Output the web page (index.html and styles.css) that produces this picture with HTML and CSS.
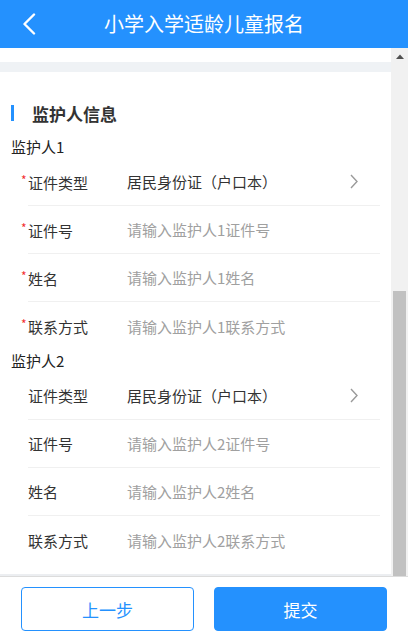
FILE: index.html
```html
<!DOCTYPE html>
<html lang="zh">
<head>
<meta charset="utf-8">
<link rel="stylesheet" href="styles.css">
</head>
<body>
<div class="page">
  <header class="header">
    <svg class="back" width="14" height="22" viewBox="0 0 14 22"><path d="M12 1.5 L2.5 11 L12 20.5" fill="none" stroke="#fff" stroke-width="2.4" stroke-linecap="round" stroke-linejoin="round"/></svg>
    <div class="title">小学入学适龄儿童报名</div>
  </header>
  <main class="main">
    <div class="content">
      <div class="top-white"></div>
      <div class="gap"></div>
      <section class="card">
        <div class="sec-title"><span class="bar"></span><span>监护人信息</span></div>

        <div class="group-label">监护人1</div>
        <div class="row"><div class="label"><span class="req">*</span>证件类型</div><div class="value">居民身份证（户口本）</div><svg class="arrow" width="8" height="15" viewBox="0 0 8 15"><path d="M1 1 L7 7.5 L1 14" fill="none" stroke="#9a9a9a" stroke-width="1.4"/></svg></div>
        <div class="row"><div class="label"><span class="req">*</span>证件号</div><div class="ph">请输入监护人1证件号</div></div>
        <div class="row"><div class="label"><span class="req">*</span>姓名</div><div class="ph">请输入监护人1姓名</div></div>
        <div class="row last"><div class="label"><span class="req">*</span>联系方式</div><div class="ph">请输入监护人1联系方式</div></div>

        <div class="group-label">监护人2</div>
        <div class="row"><div class="label">证件类型</div><div class="value">居民身份证（户口本）</div><svg class="arrow" width="8" height="15" viewBox="0 0 8 15"><path d="M1 1 L7 7.5 L1 14" fill="none" stroke="#9a9a9a" stroke-width="1.4"/></svg></div>
        <div class="row"><div class="label">证件号</div><div class="ph">请输入监护人2证件号</div></div>
        <div class="row"><div class="label">姓名</div><div class="ph">请输入监护人2姓名</div></div>
        <div class="row last"><div class="label">联系方式</div><div class="ph">请输入监护人2联系方式</div></div>
      </section>
      <div class="gap-bottom"></div>
    </div>
    <div class="scrollbar">
      <div class="sb-up"><svg width="8" height="5" viewBox="0 0 8 5"><path d="M0 5 L4 0.5 L8 5 Z" fill="#505050"/></svg></div>
      <div class="sb-thumb"></div>
    </div>
  </main>
  <footer class="footer">
    <button class="btn btn-outline">上一步</button>
    <button class="btn btn-primary">提交</button>
  </footer>
</div>
</body>
</html>
```
FILE: styles.css
```css
* { box-sizing: border-box; }
html, body { margin: 0; padding: 0; }
body {
  font-family: "Noto Sans CJK SC", "Noto Sans", sans-serif;
  color: #333;
  background: #fff;
}
.page {
  width: 408px;
  height: 642px;
  display: flex;
  flex-direction: column;
  overflow: hidden;
}
.header {
  height: 48px;
  flex: none;
  background: #2491fe;
  display: flex;
  align-items: center;
}
.back {
  margin-left: 22px;
  flex: none;
}
.title {
  flex: 1;
  text-align: center;
  color: #fff;
  font-size: 20px;
  line-height: 48px;
  margin-left: -36px;
}
.main {
  height: 528px;
  flex: none;
  display: flex;
}
.content {
  width: 391px;
  display: flex;
  flex-direction: column;
  background: #eff2f5;
}
.top-white { height: 14px; background: #fff; }
.gap { height: 10px; background: #eff2f5; }
.gap-bottom { height: 2px; background: #eceef1; }
.card {
  background: #fff;
  padding: 29px 0 10px 0;
}
.sec-title {
  display: flex;
  align-items: center;
  height: 24px;
  padding-left: 11px;
  font-size: 17px;
  font-weight: 700;
  color: #333;
}
.bar {
  width: 3px;
  height: 16px;
  background: #2491fe;
  margin-right: 18px;
}
.group-label {
  margin-top: 11px;
  height: 22px;
  line-height: 22px;
  padding-left: 11px;
  font-size: 15px;
  color: #222;
}
.card .group-label ~ .group-label { margin-top: 0; }
.row {
  height: 48px;
  margin: 0 11px 0 28px;
  border-bottom: 1px solid #f0f0f0;
  display: flex;
  align-items: center;
  font-size: 15px;
}
.row.last { border-bottom: none; }
.label {
  width: 99px;
  flex: none;
  color: #333;
}
.req {
  display: inline-block;
  width: 7px;
  margin-left: -7px;
  color: #f23030;
  font-size: 12px;
  vertical-align: 4px;
}
.value { flex: 1; color: #333; }
.ph { flex: 1; color: #a0a0a0; }
.arrow { margin-right: 22px; flex: none; }
.scrollbar {
  width: 17px;
  background: #f1f1f1;
  display: flex;
  flex-direction: column;
  justify-content: space-between;
}
.sb-up {
  height: 17px;
  display: flex;
  align-items: center;
  justify-content: center;
}
.sb-thumb {
  height: 285px;
  margin: 0 2px;
  background: #c1c1c1;
}
.footer {
  flex: 1;
  border-top: 1px solid #dcdcdc;
  background: #fff;
  display: flex;
  gap: 20px;
  padding: 10px 21px 0 21px;
}
.btn {
  flex: 1;
  height: 44px;
  border-radius: 4px;
  font-family: "Noto Sans CJK SC", "Noto Sans", sans-serif;
  font-size: 17px;
  padding: 0;
}
.btn-outline {
  background: #fff;
  border: 1px solid #2491fe;
  color: #2491fe;
}
.btn-primary {
  background: #2491fe;
  border: 1px solid #2491fe;
  color: #fff;
}
```
